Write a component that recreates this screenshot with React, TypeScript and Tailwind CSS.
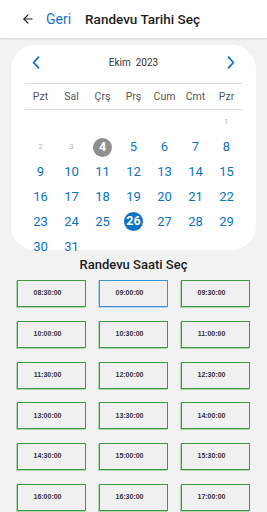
import { ArrowLeft } from "lucide-react";

const weekdays = ["Pzt", "Sal", "Çrş", "Prş", "Cum", "Cmt", "Pzr"];

const times = [
  "08:30:00", "09:00:00", "09:30:00",
  "10:00:00", "10:30:00", "11:00:00",
  "11:30:00", "12:00:00", "12:30:00",
  "13:00:00", "13:30:00", "14:00:00",
  "14:30:00", "15:00:00", "15:30:00",
  "16:00:00", "16:30:00", "17:00:00",
];

function Chevron({ dir }: { dir: "left" | "right" }) {
  return (
    <svg width="8" height="13" viewBox="0 0 8 13" fill="none">
      <path
        d={dir === "left" ? "M6.5 1.2 1.6 6.5l4.9 5.3" : "M1.5 1.2l4.9 5.3-4.9 5.3"}
        stroke="#0b72c4"
        strokeWidth="1.7"
        strokeLinecap="round"
        strokeLinejoin="round"
      />
    </svg>
  );
}

function Day({ d }: { d: number | null }) {
  if (d === null) return <div />;
  if (d === 1 || d === 2 || d === 3) {
    return (
      <div className="flex items-center justify-center text-[8px] text-[#b8b8b8]">{d}</div>
    );
  }
  if (d === 4) {
    return (
      <div className="flex items-center justify-center">
        <span className="flex h-[19px] w-[19px] items-center justify-center rounded-full bg-[#8f8f8f] text-[12.5px] font-bold text-white">
          4
        </span>
      </div>
    );
  }
  if (d === 26) {
    return (
      <div className="flex items-center justify-center">
        <span className="flex h-[19px] w-[19px] items-center justify-center rounded-full bg-[#0b72c4] text-[12.5px] font-bold text-white">
          26
        </span>
      </div>
    );
  }
  return (
    <div className="flex items-center justify-center text-[13px] text-[#0b72c4]">{d}</div>
  );
}

export default function App() {
  const cells: (number | null)[] = [null, null, null, null, null, null];
  for (let i = 1; i <= 31; i++) cells.push(i);

  return (
    <div className="min-h-screen w-full overflow-hidden bg-[#f2f2f2]" style={{ fontFamily: "Roboto, 'Noto Sans', sans-serif" }}>
      <div className="flex h-[38px] items-center bg-white shadow-[0_1px_2px_rgba(0,0,0,0.12)]">
        <ArrowLeft className="ml-[21px] h-[14px] w-[14px] text-[#222]" strokeWidth={2} />
        <span className="ml-[11px] text-[14px] text-[#1a73c8]">Geri</span>
        <span className="ml-[14px] text-[13.5px] font-medium text-[#1d1d1d]">Randevu Tarihi Seç</span>
      </div>

      <div className="mx-[11px] mt-[7px] h-[205px] rounded-[24px] bg-white px-[14px] pt-[7px]">
        <div className="flex h-[20px] items-center justify-between px-[7px]">
          <Chevron dir="left" />
          <span className="text-[10px] text-[#333]">Ekim&nbsp;&nbsp;2023</span>
          <Chevron dir="right" />
        </div>
        <div className="mt-[11px] border-t border-[#dcdcdc]" />
        <div className="grid h-[26px] grid-cols-7 items-center border-b border-[#dcdcdc]">
          {weekdays.map((w) => (
            <div key={w} className="text-center text-[10.5px] text-[#555]">
              {w}
            </div>
          ))}
        </div>
        <div className="grid grid-cols-7 auto-rows-[24.8px]">
          {cells.map((d, i) => (
            <Day key={i} d={d} />
          ))}
        </div>
      </div>

      <div className="mt-[7px] h-[16px] text-center text-[13px] font-medium leading-[16px] text-[#1d1d1d]">
        Randevu Saati Seç
      </div>

      <div className="mt-[7px] grid grid-cols-[69px_69px_69px] gap-x-[13px] gap-y-[13.8px] px-[17px] pb-4">
        {times.map((t) => (
          <div
            key={t}
            className={
              t === "09:00:00"
                ? "flex h-[27px] items-center justify-center border border-[#3b93d6] bg-[#f0f0f0] pr-[8px] shadow-[-1px_1px_0_rgba(59,147,214,0.35)]"
                : "flex h-[27px] items-center justify-center border border-[#3d9a3d] bg-[#f0f0f0] pr-[8px] shadow-[-1px_1px_0_rgba(61,154,61,0.35)]"
            }
          >
            <span className="text-[7px] font-bold text-[#333]" style={{ fontFamily: "'Liberation Sans', Arial, sans-serif" }}>
              {t}
            </span>
          </div>
        ))}
      </div>
    </div>
  );
}
